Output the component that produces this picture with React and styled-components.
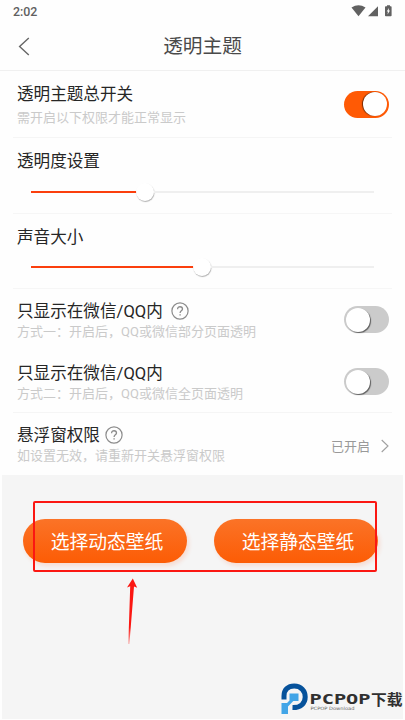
import React from "react";
import styled, { createGlobalStyle } from "styled-components";

const GlobalStyle = createGlobalStyle`
  * {
    box-sizing: border-box;
  }
  body {
    margin: 0;
    background-color: #ffffff;
    font-family: Roboto, "Noto Sans CJK SC", sans-serif;
  }
`;

const StyledPhone = styled.div`
  display: flex;
  flex-direction: column;
  position: relative;
  width: 405px;
  height: 720px;
  overflow: hidden;
  background-color: #fefefe;
`;

const StyledStatusBar = styled.div`
  display: flex;
  justify-content: space-between;
  align-items: center;
  height: 22px;
  padding: 0 13px;
  color: #606060;
  font-size: 12.4px;
  font-weight: 500;
`;

const StyledHeader = styled.header`
  display: grid;
  grid-template-columns: 40px 1fr 40px;
  align-items: center;
  height: 49px;
  border-bottom: 1px solid #f0f0f0;
`;

const StyledBack = styled.svg`
  margin: 0 0 0 18px;
`;

const StyledHeaderTitle = styled.h1`
  margin: 0;
  padding-top: 2px;
  color: #4a4a4a;
  font-size: 19.7px;
  font-weight: 400;
  line-height: 24px;
  text-align: center;
`;

const StyledRow = styled.section`
  display: flex;
  justify-content: space-between;
  align-items: center;
  height: ${props => props.$height}px;
  margin: 0 13px;
  padding: 0 4px;
  border-bottom: 1px solid ${props => (props.$divider ? "#f5f5f5" : "transparent")};
`;

const StyledSliderRow = styled.section`
  height: ${props => props.$height}px;
  margin: 0 13px;
  padding: 10px 4px 0;
  border-bottom: 1px solid #f6f6f6;
`;

const StyledTitle = styled.div`
  display: flex;
  align-items: center;
  gap: ${props => props.$gap || 5}px;
  padding-top: 2px;
  color: #262626;
  font-size: 16.6px;
  line-height: 23px;
  white-space: nowrap;

  svg {
    margin-top: -2px;
  }
`;

const StyledHint = styled.div`
  margin-top: ${props => props.$top || 0}px;
  color: #cacaca;
  font-size: 13px;
  line-height: 18px;
  white-space: nowrap;
`;

const StyledSwitch = styled.div`
  display: flex;
  justify-content: ${props => (props.$on ? "flex-end" : "flex-start")};
  align-items: center;
  width: 45px;
  height: 27px;
  margin-right: -1px;
  padding: 0 2px;
  border-radius: 14px;
  background-color: ${props => (props.$on ? "#ff5a05" : "#cbcbcb")};
`;

const StyledKnob = styled.div`
  width: 24px;
  height: 24px;
  border-radius: 50%;
  background-color: #ffffff;
  box-shadow: ${props => (props.$on ? "-1px 0" : "1px 1px")} 1px rgba(0, 0, 0, 0.55);
`;

const StyledSlider = styled.div`
  display: flex;
  align-items: center;
  height: 20px;
  margin: ${props => props.$top}px 14px 0 14px;
`;

const StyledFill = styled.div`
  height: 2px;
  background-color: #fb3f0d;
`;

const StyledThumb = styled.div`
  flex: none;
  width: 18px;
  height: 18px;
  margin-left: -2px;
  border-radius: 50%;
  background-color: #ffffff;
  box-shadow: 0.5px 1px 1px rgba(0, 0, 0, 0.3);
`;

const StyledRest = styled.div`
  flex: 1;
  height: 2px;
  background-color: #efefef;
`;

const StyledState = styled.div`
  display: flex;
  align-items: center;
  gap: 11px;
  margin-top: 4px;
  margin-right: -1px;
  color: #999999;
  font-size: 13px;
`;

const StyledFooter = styled.div`
  display: flex;
  justify-content: space-between;
  align-items: flex-start;
  height: 244px;
  margin: 0 2px;
  padding: 44px 25px 0 21px;
  background-color: #f5f5f5;
`;

const StyledButton = styled.button`
  width: 164px;
  height: 44px;
  padding: 0 0 2px 4px;
  border: 0;
  border-radius: 22px;
  background: linear-gradient(#fb7327, #fc5c05);
  box-shadow: 2px 3px 4px rgba(255, 92, 40, 0.16);
  color: #ffffff;
  font-family: inherit;
  font-size: 18.8px;
  white-space: nowrap;
`;

const StyledFrame = styled.div`
  position: absolute;
  left: 33px;
  top: 501px;
  width: 344px;
  height: 71px;
  border: 2px solid #fb1712;
  border-radius: 2px;
`;

const StyledArrow = styled.svg`
  position: absolute;
  left: 124px;
  top: 577px;
`;

const StyledWatermark = styled.svg`
  position: absolute;
  left: 278px;
  top: 681px;
`;

const StatusIcons = () => (
  <svg width="42" height="14" viewBox="0 0 42 14" fill="#616161">
    <path d="M1.5 3.4Q8.5-0.7 15.5 3.4L8.5 12.2Z" />
    <path d="M28 2.2V12.2H18Z" />
    <path d="M37 1.2h3v1h.8q.8 0 .8.8v8.4q0 .8-.8.8h-5q-.8 0-.8-.8V3q0-.8.8-.8H37Z" />
    <path d="M39 4 36.7 7.5h1.3l-.5 3 2.5-4h-1.3Z" fill="#ffffff" />
  </svg>
);

const HelpIcon = () => (
  <svg width="18" height="18" viewBox="0 0 18 18" fill="none" stroke="#8c8c8c" strokeWidth="1.2">
    <circle cx="9" cy="9" r="8.1" />
    <path d="M6.6 7.2C6.6 3.8 11.5 4.1 11.5 7C11.5 8.7 9.1 9 9.1 10.9" strokeWidth="1.3" />
    <path d="M9.1 12.2v1.3" strokeWidth="1.4" />
  </svg>
);

const Switch = ({ on }) => (
  <StyledSwitch $on={on}>
    <StyledKnob $on={on} />
  </StyledSwitch>
);

const Slider = ({ value, top }) => (
  <StyledSlider $top={top}>
    <StyledFill style={{ width: value }} />
    <StyledThumb />
    <StyledRest />
  </StyledSlider>
);

const Watermark = () => (
  <StyledWatermark width="127" height="36" viewBox="0 0 127 36">
    <path
      d="M6 18.5V15C6 8.7 10 5 16.2 5C23 5 27.2 9.8 27.2 16C27.2 22.5 22.5 26.8 14.5 26.6"
      fill="none"
      stroke="#06529b"
      strokeWidth="5"
    />
    <path d="M11.5 12.5h9V20h-5.2L10 25.4V33H3.5V22H9l2.5-2.5Z" fill="#42a5e7" />
    <text
      x="31.5"
      y="22.8"
      textLength="61"
      lengthAdjust="spacingAndGlyphs"
      fill="#303030"
      fontFamily="DejaVu Sans Mono"
      fontSize="14.5"
      fontWeight="700"
    >
      PCPOP
    </text>
    <text
      x="93"
      y="23.8"
      textLength="31.5"
      lengthAdjust="spacingAndGlyphs"
      fill="#303030"
      fontFamily="Noto Sans CJK SC"
      fontSize="14.5"
      fontWeight="700"
    >
      下载
    </text>
    <text
      x="32.5"
      y="28.6"
      textLength="44"
      lengthAdjust="spacingAndGlyphs"
      fill="#666666"
      fontFamily="DejaVu Sans"
      fontSize="4.5"
    >
      PCPOP Download
    </text>
  </StyledWatermark>
);

const App = () => {
  return (
    <StyledPhone>
      <GlobalStyle />
      <StyledStatusBar>
        <span>2:02</span>
        <StatusIcons />
      </StyledStatusBar>
      <StyledHeader>
        <StyledBack width="12" height="19" fill="none" stroke="#666666" strokeWidth="1.4">
          <path d="M10.8 1 1.6 9.5l9.2 8.5" />
        </StyledBack>
        <StyledHeaderTitle>透明主题</StyledHeaderTitle>
      </StyledHeader>

      <StyledRow $height={67} $divider>
        <div>
          <StyledTitle>透明主题总开关</StyledTitle>
          <StyledHint $top={3}>需开启以下权限才能正常显示</StyledHint>
        </div>
        <Switch on />
      </StyledRow>
      <StyledSliderRow $height={76}>
        <StyledTitle>透明度设置</StyledTitle>
        <Slider value={107} top={9} />
      </StyledSliderRow>
      <StyledSliderRow $height={75}>
        <StyledTitle>声音大小</StyledTitle>
        <Slider value={164} top={8} />
      </StyledSliderRow>
      <StyledRow $height={62}>
        <div>
          <StyledTitle $gap={8}>
            只显示在微信/QQ内
            <HelpIcon />
          </StyledTitle>
          <StyledHint>方式一：开启后，QQ或微信部分页面透明</StyledHint>
        </div>
        <Switch />
      </StyledRow>
      <StyledRow $height={62} $divider>
        <div>
          <StyledTitle>只显示在微信/QQ内</StyledTitle>
          <StyledHint>方式二：开启后，QQ或微信全页面透明</StyledHint>
        </div>
        <Switch />
      </StyledRow>
      <StyledRow $height={62}>
        <div>
          <StyledTitle>
            悬浮窗权限
            <HelpIcon />
          </StyledTitle>
          <StyledHint>如设置无效，请重新开关悬浮窗权限</StyledHint>
        </div>
        <StyledState>
          已开启
          <svg width="8" height="14" fill="none" stroke="#a0a0a0" strokeWidth="1.1">
            <path d="M.7 1 7 7 .7 13" />
          </svg>
        </StyledState>
      </StyledRow>

      <StyledFooter>
        <StyledButton>选择动态壁纸</StyledButton>
        <StyledButton>选择静态壁纸</StyledButton>
      </StyledFooter>

      <StyledFrame />
      <StyledArrow width="16" height="70" viewBox="0 0 16 70">
        <defs>
          <linearGradient id="tail" x1="0" y1="0" x2="0" y2="1">
            <stop offset="0.75" stopColor="#fb1712" />
            <stop offset="1" stopColor="#fb1712" stopOpacity="0.3" />
          </linearGradient>
        </defs>
        <path d="M8.8 1.5 13.2 10.8 10 9.6 5.4 67H4.3L6.2 9.3 3 10.5Z" fill="url(#tail)" />
      </StyledArrow>
      <Watermark />
    </StyledPhone>
  );
};

export default App;
